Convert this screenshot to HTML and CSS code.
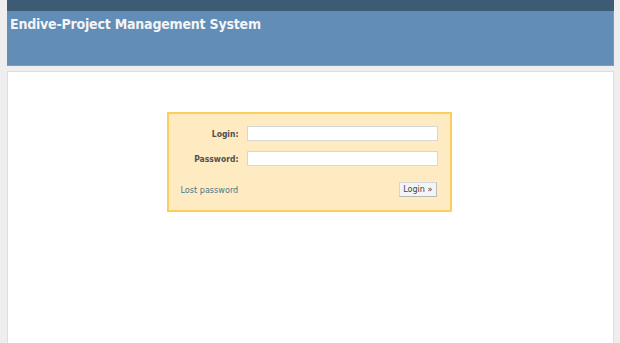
FILE: index.html
```html
<!DOCTYPE html>
<html>
<head>
<meta charset="utf-8">
<link rel="stylesheet" href="styles.css">
</head>
<body>
<div class="wrapper">
  <div class="top-menu"></div>
  <div class="header"><h1>Endive-Project Management System</h1></div>
  <div class="main">
    <div class="login-form">
      <div class="row"><label>Login:</label><input type="text" class="field"></div>
      <div class="row"><label>Password:</label><input type="password" class="field"></div>
      <div class="actions">
        <a href="#" class="lost">Lost password</a>
        <button class="btn">Login &#187;</button>
      </div>
    </div>
  </div>
</div>
</body>
</html>
```
FILE: styles.css
```css
html, body { margin: 0; padding: 0; }
body {
  background: #eeeeee;
  font-family: "DejaVu Sans Condensed", "DejaVu Sans", Verdana, sans-serif;
  font-size: 9px;
  color: #484848;
  height: 343px;
  overflow: hidden;
}
.wrapper {
  margin: 0 6px 0 7px;
  display: flex;
  flex-direction: column;
}
.top-menu {
  height: 11px;
  background: #3e5b76;
}
.header {
  height: 54px;
  background: #628db6;
  border-right: 1px solid #7a9cc0;
  border-bottom: 1px solid #7a9cc0;
}
.header h1 {
  margin: 0;
  padding: 5px 0 0 3px;
  color: #f4f4f4;
  font-size: 14px;
  font-weight: bold;
  letter-spacing: -0.2px;
}
.main {
  margin-top: 5px;
  background: #fff;
  border: 1px solid #dddddd;
  border-bottom: none;
  height: 272px;
  display: flex;
  justify-content: center;
  align-items: flex-start;
  padding-top: 40px;
  box-sizing: border-box;
}
.login-form {
  width: 281px;
  height: 96px;
  margin-left: -3px;
  border: 2px solid #fdce5b;
  background: #ffebc1;
  display: flex;
  flex-direction: column;
}
.row {
  display: flex;
  align-items: center;
  height: 15px;
  margin-top: 10px;
}
.row:first-child { margin-top: 12px; }
.row label {
  width: 70px;
  text-align: right;
  font-weight: bold;
  font-size: 8.5px;
  color: #505050;
  margin-right: 8px;
}
.field {
  width: 191px;
  height: 15px;
  box-sizing: border-box;
  border: 1px solid #d7d7d7;
  background: #fff;
  padding: 0;
  margin: 0;
}
.actions {
  display: flex;
  justify-content: space-between;
  align-items: center;
  margin-top: 16px;
  padding: 0 13px 0 12px;
}
.lost {
  color: #3f7a8e;
  text-decoration: none;
  font-size: 9px;
}
.btn {
  font-family: "DejaVu Sans Condensed", "DejaVu Sans", Verdana, sans-serif;
  font-size: 9px;
  color: #444;
  background: #f4f4f4;
  border: 1px solid #d6d6d6;
  border-right-color: #bdbdbd;
  border-bottom-color: #b8b8b8;
  padding: 1px 3px;
  height: 15px;
  line-height: 11px;
  margin: 0;
}
```
